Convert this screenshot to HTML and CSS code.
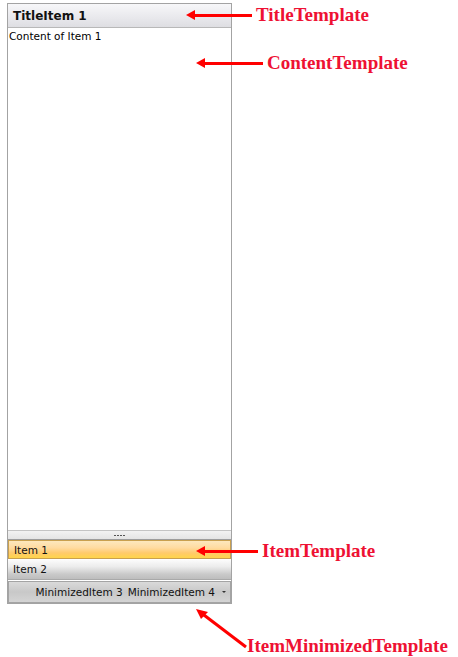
FILE: index.html
```html
<!DOCTYPE html>
<html>
<head>
<meta charset="utf-8">
<link rel="stylesheet" href="styles.css">
</head>
<body>
<div class="page">
  <div class="tile">
    <div class="title">TitleItem 1</div>
    <div class="content">Content of Item 1</div>
    <div class="splitter"><span class="grip"></span></div>
    <div class="item item-sel">Item 1</div>
    <div class="item item-norm">Item 2</div>
    <div class="minbar">
      <span class="min">MinimizedItem 3</span>
      <span class="min">MinimizedItem 4</span>
      <span class="drop"></span>
    </div>
  </div>

  <div class="note n-title"><span class="arrow a-title"></span><span class="label">TitleTemplate</span></div>
  <div class="note n-content"><span class="arrow a-content"></span><span class="label">ContentTemplate</span></div>
  <div class="note n-item"><span class="arrow a-item"></span><span class="label">ItemTemplate</span></div>
  <svg class="diag" width="60" height="45" viewBox="0 0 60 45">
    <line x1="4" y1="3" x2="50" y2="38" stroke="#ff0000" stroke-width="3"/>
    <polygon points="0,0 12,3 5,10" fill="#ff0000"/>
  </svg>
  <div class="label n-min">ItemMinimizedTemplate</div>
</div>
</body>
</html>
```
FILE: styles.css
```css
html, body {
  margin: 0;
  padding: 0;
  background: #ffffff;
}
.page {
  position: relative;
  width: 458px;
  height: 657px;
  padding-top: 3px;
  padding-left: 7px;
  box-sizing: border-box;
}
.tile {
  width: 225px;
  height: 601px;
  border: 1px solid #a3a3a3;
  box-sizing: border-box;
  display: flex;
  flex-direction: column;
  font-family: "DejaVu Sans", Verdana, sans-serif;
  color: #111;
  background: #fff;
}
.title {
  height: 24px;
  box-sizing: border-box;
  border-bottom: 1px solid #b8b8b8;
  background: linear-gradient(#f7f7f9, #e8e8ec 60%, #dedee2);
  font-weight: bold;
  font-size: 12px;
  line-height: 24px;
  padding-left: 5px;
  color: #111;
}
.content {
  flex: 1;
  font-size: 10.5px;
  padding: 2px 0 0 1px;
  line-height: 12px;
  color: #000;
}
.splitter {
  height: 10px;
  box-sizing: border-box;
  border-top: 1px solid #c4c4c4;
  border-bottom: 1px solid #9c9c9c;
  background: linear-gradient(#f2f2f2, #e4e4e4);
  display: flex;
  justify-content: center;
  align-items: center;
}
.grip {
  width: 11px;
  height: 1px;
  background: repeating-linear-gradient(90deg, #555 0 2px, transparent 2px 3px);
}
.item {
  height: 19px;
  box-sizing: border-box;
  font-size: 10.5px;
  line-height: 18px;
  padding-left: 5px;
  color: #111;
}
.item-sel {
  border: 1px solid #c9a04e;
  background: linear-gradient(#fde8bd, #ffdba0 40%, #ffca6b 70%, #ffd54a);
}
.item-norm {
  margin-top: 1px;
  height: 20px;
  border-bottom: 1px solid #a9a9a9;
  background: linear-gradient(#fbfbfb, #ececec 35%, #c9c9c9 75%, #bdbdbd);
}
.minbar {
  margin-top: 1px;
  flex: 0 0 22px;
  box-sizing: border-box;
  border: 1px solid #a4a4a4;
  background: linear-gradient(#dadada, #c8c8c8 50%, #d4d4d4);
  display: flex;
  justify-content: flex-end;
  align-items: center;
  font-size: 10.5px;
  gap: 5px;
  padding-right: 4px;
  color: #111;
}
.drop {
  width: 0;
  height: 0;
  border-left: 2px solid transparent;
  border-right: 2px solid transparent;
  border-top: 2px solid #333;
  margin-left: 2px;
}
.note {
  position: absolute;
  display: flex;
  align-items: center;
}
.arrow {
  position: relative;
  height: 3px;
  background: #ff0000;
  margin-right: 4px;
}
.arrow::before {
  content: "";
  position: absolute;
  left: -6px;
  top: -4px;
  border-top: 5.5px solid transparent;
  border-bottom: 5.5px solid transparent;
  border-right: 9px solid #ff0000;
}
.label {
  font-family: "Liberation Serif", "Times New Roman", serif;
  font-weight: bold;
  font-size: 19px;
  color: #ee1133;
  white-space: nowrap;
}
.n-title { left: 192px; top: 4px; }
.a-title { width: 60px; }
.n-content { left: 202px; top: 52px; }
.a-content { width: 61px; }
.n-item { left: 202px; top: 540px; }
.a-item { width: 56px; }
.diag {
  position: absolute;
  left: 196px;
  top: 609px;
}
.n-min {
  position: absolute;
  left: 247px;
  top: 635px;
}
```
